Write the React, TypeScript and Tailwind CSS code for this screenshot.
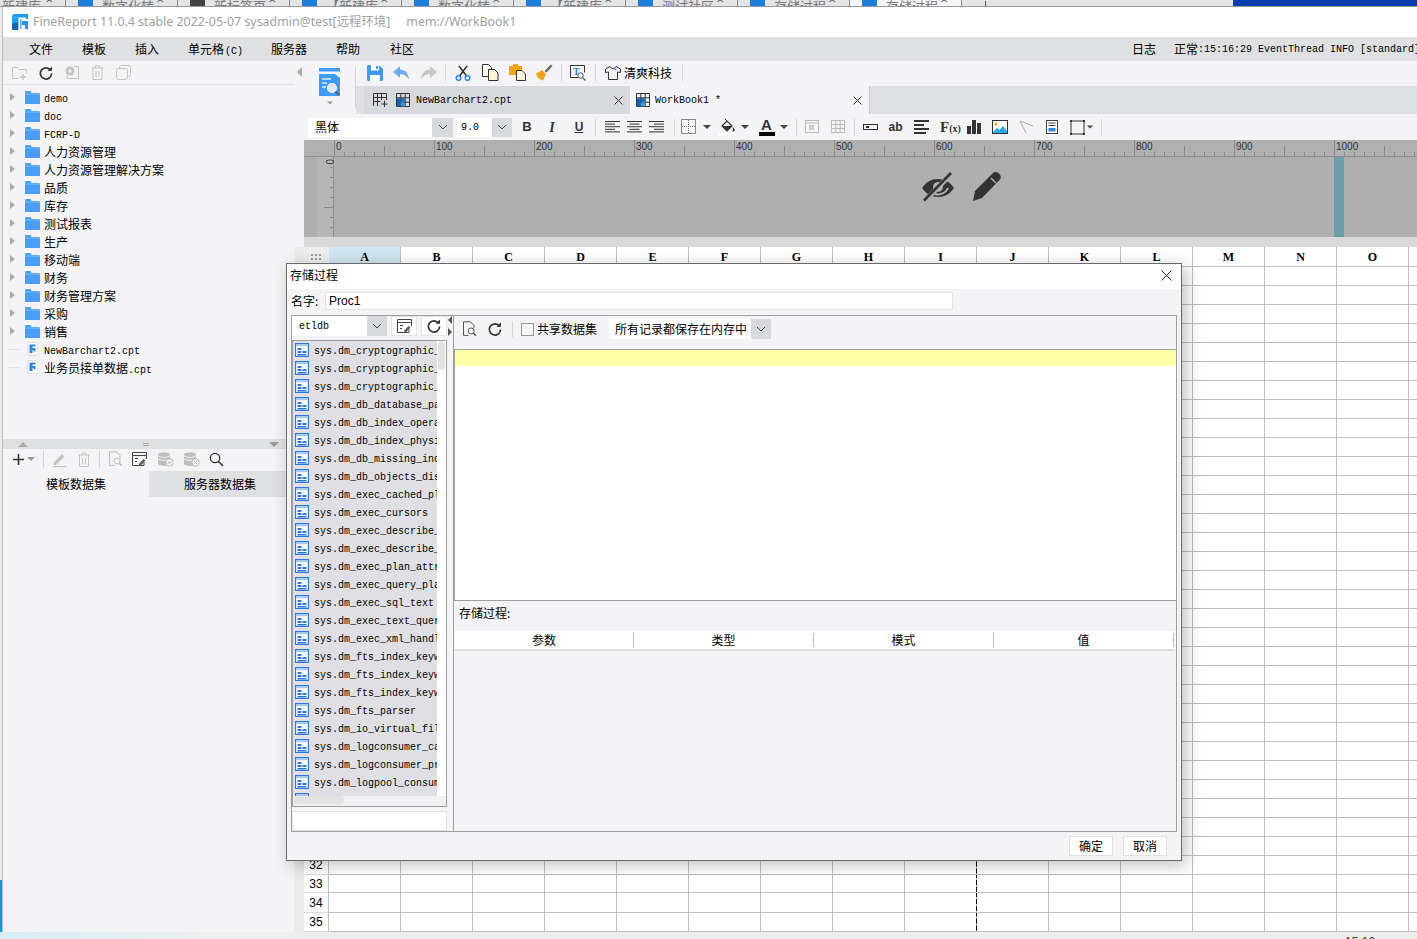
import type { ReactNode } from "react";

const cjk = "font-['Noto_Sans_CJK_SC',sans-serif] text-[12px] text-black";
const mono = "font-['Liberation_Mono','Noto_Sans_CJK_SC',monospace] text-[10px] text-black";
const treeMono = `${mono} inline-block -translate-y-px`;

const browserTabs = ["数字化转", "新标签页", "【新建库", "数字化转", "【新建库", "测试社区", "存储过程", "存储过程"];
const folders = ["人力资源管理", "人力资源管理解决方案", "品质", "库存", "测试报表", "生产", "移动端", "财务", "财务管理方案", "采购", "销售"];
const procs = [
  "sys.dm_cryptographic_provider_algorithms",
  "sys.dm_cryptographic_provider_keys",
  "sys.dm_cryptographic_provider_properties",
  "sys.dm_db_database_page_allocations",
  "sys.dm_db_index_operational_stats",
  "sys.dm_db_index_physical_stats",
  "sys.dm_db_missing_index_columns",
  "sys.dm_db_objects_disabled",
  "sys.dm_exec_cached_plan_dependent",
  "sys.dm_exec_cursors",
  "sys.dm_exec_describe_first_result",
  "sys.dm_exec_describe_first_result_set",
  "sys.dm_exec_plan_attributes",
  "sys.dm_exec_query_plan",
  "sys.dm_exec_sql_text",
  "sys.dm_exec_text_query_plan",
  "sys.dm_exec_xml_handles",
  "sys.dm_fts_index_keywords",
  "sys.dm_fts_index_keywords_by_doc",
  "sys.dm_fts_index_keywords_by_prop",
  "sys.dm_fts_parser",
  "sys.dm_io_virtual_file_stats",
  "sys.dm_logconsumer_cachebufferrefs",
  "sys.dm_logconsumer_privatecachebuffers",
  "sys.dm_logpool_consumers",
  "sys.dm_logpool_hashentries",
];
const columns = "ABCDEFGHIJKLMNOP".split("");
const rows = Array.from({ length: 35 }, (_, i) => i + 1);

function Svg({ w = 18, h = 18, children, className }: { w?: number; h?: number; children: ReactNode; className?: string }) {
  return (
    <svg width={w} height={h} viewBox={`0 0 ${w} ${h}`} fill="none" className={`shrink-0 ${className ?? ""}`}>
      {children}
    </svg>
  );
}

function Logo() {
  return (
    <svg width="16" height="16" viewBox="0 0 16 16" className="shrink-0">
      <path d="M3 0h13v5H9.500v10H6.500V3.500H0V3a3 3 0 0 1 3-3z" fill="#1b9af2" />
      <path d="M0 3.500h6.500V16H0z" fill="#1b9af2" />
      <path d="M0 10l6.500-2v8H0z" fill="#1663b4" />
      <path d="M6.500 3.500h1.800V16H6.500zM6.500 3.500H14v1.800H6.500z" fill="#fff" />
      <path d="M10 7h6v8h-3v-4h-3z" fill="#1b9af2" />
    </svg>
  );
}

function Folder() {
  return (
    <Svg w={15} h={13}>
      <path d="M0 1.500C0 .7.600 0 1.400 0h3.800l1.600 2h6.800c.8 0 1.400.6 1.400 1.400V13H0z" fill="#4a9df8" />
      <path d="M0 3h15" stroke="#8dc1fb" strokeWidth=".8" />
    </Svg>
  );
}

function Caret({ className }: { className?: string }) {
  return <span className={`inline-block h-0 w-0 border-x-[4px] border-t-[4px] border-x-transparent border-t-[#444] ${className ?? ""}`} />;
}

function Sep({ h = "h-[17px]" }: { h?: string }) {
  return <span className={`block w-px shrink-0 bg-[#d4d5d8] ${h}`} />;
}

function Refresh() {
  return (
    <Svg w={14} h={14}>
      <path d="M11.600 4.200A5.600 5.600 0 1 0 12.600 7.500" stroke="#333" strokeWidth="1.700" />
      <path d="M8.400 4.800h4.600V.4z" fill="#333" />
    </Svg>
  );
}

function DocSearch({ c = "#555" }: { c?: string }) {
  return (
    <Svg w={15} h={16}>
      <path d="M1.500.8h7l3.500 3.500v3M1.500.8v13.600h5" stroke={c} />
      <circle cx="9.200" cy="10" r="3" stroke={c} />
      <path d="M11.400 12.200l2.400 2.400" stroke={c} strokeWidth="1.500" />
    </Svg>
  );
}

function DsEdit() {
  return (
    <Svg w={15} h={14}>
      <path d="M12 10v3.500H.5V.5h14V7" stroke="#444" />
      <path d="M.5 3.500h14M3 6.500h3M3 9.500h2" stroke="#444" />
      <path d="M7 12l4.500-5 1.800 1.600-4.500 5H7z" fill="#555" />
    </Svg>
  );
}

function Db({ badge }: { badge: "play" | "x" }) {
  return (
    <Svg w={17} h={15}>
      <ellipse cx="7" cy="2.600" rx="6" ry="2.400" fill="#bdbdbd" />
      <path d="M1 3.500v8c0 1.300 2.700 2.400 6 2.400s6-1.100 6-2.400v-8c0 1.300-2.700 2.400-6 2.400S1 4.800 1 3.500z" fill="#bdbdbd" />
      <path d="M1 7c1.500 1.600 10.500 1.600 12 0" stroke="#f4f4f6" />
      <circle cx="12.500" cy="10.500" r="3.700" fill="#f4f4f6" stroke="#bbb" />
      {badge === "play" ? <path d="M11.500 8.800l3 1.700-3 1.700z" fill="#bbb" /> : <path d="M11 9l3 3M14 9l-3 3" stroke="#bbb" />}
    </Svg>
  );
}

function TableIcon() {
  return (
    <Svg w={14} h={14}>
      <path d="M.5.5h13v13H.5zM.5 4.800h13M.5 9.200h13M4.800.5v13M9.200.5v13" stroke="#333" />
      <path d="M1 5.300h7.700v3.400H5.300v4.800H1z" fill="#1565b5" />
      <path d="M6 9.500h2.700v4H6z" fill="#1b9af2" />
    </Svg>
  );
}

function ProcIcon() {
  return (
    <Svg w={14} h={14}>
      <rect x=".5" y=".5" width="13" height="13" fill="#fff" stroke="#2f77e4" strokeWidth="1.300" />
      <path d="M1 1h12v2.200H1z" fill="#a9c9f5" />
      <path d="M2.500 5H6.500V7H2.500zM2.500 8H6.500V10H2.500zM7.500 8H11.500V10H7.500zM2.500 11H11.500V12.500H2.500z" fill="#2f77e4" />
    </Svg>
  );
}

function Align({ kind }: { kind: "l" | "c" | "r" }) {
  const short = [1, 3];
  return (
    <Svg w={15} h={13}>
      {[0, 1, 2, 3, 4].map((i) => {
        const len = short.includes(i) ? 10 : 15;
        const x = kind === "l" ? 0 : kind === "c" ? (15 - len) / 2 : 15 - len;
        return <rect key={i} x={x} y={i * 2.6} width={len} height="1" fill="#333" />;
      })}
    </Svg>
  );
}

function Select({ value, width, arrow, text, pad = "pl-[7px]" }: { value: string; width: string; arrow: string; text?: string; pad?: string }) {
  return (
    <div className={`flex shrink-0 items-center bg-white ${width}`}>
      <span className={`flex-1 overflow-hidden whitespace-nowrap ${pad} ${text ?? cjk}`}>{value}</span>
      <span className={`flex h-full items-center justify-center bg-[#d8d9dd] ${arrow}`}>
        <Svg w={10} h={6}>
          <path d="M1 1l4 4 4-4" stroke="#444" />
        </Svg>
      </span>
    </div>
  );
}

function BrowserTabs() {
  return (
    <div className="flex h-[7px] shrink-0 overflow-hidden border-b border-[#999] bg-[#e2e4e6]">
      <div className="relative flex w-[66px] shrink-0 items-end border-r border-[#888] pl-[2px]">
        <span className="font-['Noto_Sans_CJK_SC',sans-serif] text-[13px] leading-[0px] text-[#777]">新建库</span>
        <span className="absolute right-[12px] top-[-7px] text-[13px] leading-[13px] text-[#555]">×</span>
      </div>
      {browserTabs.map((t, i) => (
        <div key={i} className={`relative flex w-[112px] shrink-0 items-end gap-[9px] border-r border-[#888] pl-[12px] ${i === 7 ? "bg-[#f6f6f6]" : ""}`}>
          <span className={`h-[6px] w-[15px] shrink-0 ${i === 1 ? "bg-[#444]" : "bg-[#1b7ddc]"}`} />
          <span className="whitespace-nowrap font-['Noto_Sans_CJK_SC',sans-serif] text-[13px] leading-[0px] text-[#777]">{t}</span>
          <span className="absolute right-[13px] top-[-7px] text-[13px] leading-[13px] text-[#555]">×</span>
        </div>
      ))}
      <div className="flex flex-1 items-end pl-[23px]">
        <span className="h-[5px] w-px bg-[#555]" />
      </div>
      <div className="w-[184px] shrink-0 bg-[#0a3db0]" />
    </div>
  );
}

function TitleBar() {
  return (
    <div className="flex h-[30px] shrink-0 items-center bg-white pl-[9px] font-['Noto_Sans','Noto_Sans_CJK_SC',sans-serif] text-[12.4px] text-[#a0a0a0]">
      <Logo />
      <span className="ml-[5px] whitespace-nowrap">FineReport 11.0.4 stable 2022-05-07 sysadmin@test[远程环境]</span>
      <span className="ml-[16px] whitespace-nowrap">mem://WorkBook1</span>
    </div>
  );
}

function MenuBar() {
  const items: [string, string][] = [["文件", "ml-[26px]"], ["模板", "ml-[29px]"], ["插入", "ml-[29px]"], ["单元格", "ml-[29px]"], ["服务器", "ml-[28px]"], ["帮助", "ml-[29px]"], ["社区", "ml-[30px]"]];
  return (
    <div className="flex h-[24px] shrink-0 items-center overflow-hidden bg-[#dfe0e2]">
      {items.map(([label, ml]) => (
        <span key={label} className={`${cjk} whitespace-nowrap ${ml}`}>
          {label}
          {label === "单元格" ? <span className={`${mono} ml-[1px]`}>(C)</span> : null}
        </span>
      ))}
      <div className="ml-auto flex w-[285px] shrink-0 items-center whitespace-nowrap">
        <span className={cjk}>日志</span>
        <span className="mx-[9px] h-[11px] w-px bg-black" />
        <span className={cjk}>正常</span>
        <span className={mono}>:15:16:29 EventThread INFO [standard]</span>
      </div>
    </div>
  );
}

function TreeRow({ caret = true, children, icon }: { caret?: boolean; children: ReactNode; icon: ReactNode }) {
  return (
    <div className="flex h-[18px] items-center">
      <span className="flex w-[22px] justify-start pl-[7px]">
        {caret ? <span className="h-0 w-0 border-y-[4px] border-l-[5px] border-y-transparent border-l-[#aaa]" /> : <span className="ml-[-1px] mt-[1px] h-px w-[12px] bg-[#e2e2e4]" />}
      </span>
      {icon}
      <span className="ml-[4px] whitespace-nowrap">{children}</span>
    </div>
  );
}

function FileIcon() {
  return (
    <Svg w={15} h={14}>
      <path d="M3 .5h8l2 2v11H3z" fill="#fff" stroke="#ddd" />
      <path d="M4.500 2.500h6v2H7.500v1.500h3v3.500h-2V8h-1v3h-3z" fill="#2b89e6" />
    </Svg>
  );
}

function LeftPanel() {
  return (
    <div className="flex w-[291px] shrink-0 flex-col">
      <div className="flex h-[24px] shrink-0 items-center gap-[11px] border-b border-[#dfe0e2] pl-[9px]">
        <Svg w={15} h={14}>
          <path d="M.5 12.500V1.500h5l1.500 2h7.500v4M.5 12.500h6" stroke="#c4c4c4" />
          <path d="M11 8v6M8 11h6" stroke="#c4c4c4" strokeWidth="1.500" />
        </Svg>
        <span className="flex w-[15px] justify-center"><Refresh /></span>
        <Svg w={15} h={15}>
          <circle cx="6" cy="6" r="4.500" fill="#c4c4c4" />
          <circle cx="6" cy="6" r="1.700" fill="#f4f4f6" />
          <path d="M10 1.500h4.500v12H3v-3" stroke="#c4c4c4" />
        </Svg>
        <Svg w={15} h={15}>
          <path d="M1.500 3h12M5 3V.8h5V3M3 3v11.500h9V3M6 6v6M9 6v6" stroke="#c4c4c4" />
        </Svg>
        <Svg w={15} h={15}>
          <rect x="3.500" y=".5" width="11" height="11" rx="2" stroke="#c4c4c4" />
          <rect x=".5" y="3.500" width="11" height="11" rx="2" fill="#f4f4f6" stroke="#c4c4c4" />
        </Svg>
      </div>
      <div className="mt-[3px] h-[351px] shrink-0">
        <TreeRow icon={<Folder />}><span className={treeMono}>demo</span></TreeRow>
        <TreeRow icon={<Folder />}><span className={treeMono}>doc</span></TreeRow>
        <TreeRow icon={<Folder />}><span className={treeMono}>FCRP-D</span></TreeRow>
        {folders.map((f) => (
          <TreeRow key={f} icon={<Folder />}><span className={cjk}>{f}</span></TreeRow>
        ))}
        <TreeRow caret={false} icon={<FileIcon />}><span className={treeMono}>NewBarchart2.cpt</span></TreeRow>
        <TreeRow caret={false} icon={<FileIcon />}>
          <span className={cjk}>业务员接单数据</span>
          <span className={mono}>.cpt</span>
        </TreeRow>
      </div>
      <div className="flex h-[10px] shrink-0 items-center justify-between bg-[#dfe0e2] px-[15px]">
        <span className="h-0 w-0 border-x-[5px] border-b-[5px] border-x-transparent border-b-[#aaa]" />
        <span className="mr-[5px] h-[3px] w-[6px] border-y border-[#aaa]" />
        <span className="h-0 w-0 border-x-[5px] border-t-[5px] border-x-transparent border-t-[#999]" />
      </div>
      <div className="flex h-[22px] shrink-0 items-center pb-[2px] pl-[9px]">
        <Svg w={13} h={13}><path d="M6.500 1v11M1 6.500h11" stroke="#333" strokeWidth="1.600" /></Svg>
        <Caret className="ml-[2px] border-t-[#999]" />
        <span className="ml-[8px]"><Sep /></span>
        <span className="ml-[8px]">
          <Svg w={15} h={15}>
            <path d="M1.500 11l8.500-9 2.500 2.500L4 13H1.500z" fill="#c4c4c4" />
            <path d="M1 14.500h13" stroke="#c4c4c4" />
          </Svg>
        </span>
        <span className="ml-[10px]">
          <Svg w={14} h={15}><path d="M1 3h12M5 3V1h4v2M2.500 3v11.500h9V3M5.500 6v6M8.500 6v6" stroke="#c4c4c4" /></Svg>
        </span>
        <span className="ml-[8px]"><Sep /></span>
        <span className="ml-[8px]"><DocSearch c="#bbb" /></span>
        <span className="ml-[9px]"><DsEdit /></span>
        <span className="ml-[10px]"><Db badge="play" /></span>
        <span className="ml-[9px]"><Db badge="x" /></span>
        <span className="ml-[9px]">
          <Svg w={15} h={15}>
            <circle cx="6" cy="6" r="4.700" stroke="#333" strokeWidth="1.300" />
            <path d="M9.500 9.500l4.500 4.500" stroke="#333" strokeWidth="1.600" />
          </Svg>
        </span>
      </div>
      <div className="flex h-[26px] shrink-0">
        <div className={`flex w-[146px] items-center justify-center bg-[#f4f4f6] ${cjk}`}>模板数据集</div>
        <div className={`flex flex-1 items-center justify-start bg-[#dfe0e2] pl-[35px] ${cjk}`}>服务器数据集</div>
      </div>
    </div>
  );
}

function TopToolbar() {
  return (
    <div className="flex h-[53px] shrink-0">
      <div className="flex w-[51px] shrink-0 flex-col items-center pt-[7px]">
        <Svg w={21} h={28}>
          <path d="M0 0h21v3.500H0z" fill="#3d9bf5" />
          <path d="M0 6h16l5 4v18H0z" fill="#3d9bf5" />
          <path d="M3 11h9M3 15h5M3 19h4" stroke="#d8ebfe" strokeWidth="1.300" />
          <circle cx="13" cy="20" r="4.500" fill="#dfe6ee" stroke="#f2f5f8" strokeWidth="1.200" />
          <path d="M16.500 23.500l3.500 3.500" stroke="#555" strokeWidth="1.600" />
        </Svg>
        <Caret className="mt-[5px] scale-75 border-t-[#999]" />
      </div>
      <span className="mt-[6px] h-[41px] w-px bg-[#d4d5d8]" />
      <div className="flex min-w-0 flex-1 flex-col">
        <div className="flex h-[25px] shrink-0 items-center pb-[2px] pl-[11px]">
          <Svg w={16} h={16}>
            <path d="M1.500 0h10.500L16 4v10.500c0 .8-.7 1.500-1.500 1.500h-13C.7 16 0 15.300 0 14.500v-13C0 .7.700 0 1.500 0z" fill="#3d9bf5" />
            <path d="M4 0h8v5.500H4z" fill="#fff" />
            <path d="M9 1h2v3H9z" fill="#3d9bf5" />
            <path d="M3 10h10v6H3z" fill="#fff" />
          </Svg>
          <span className="ml-[10px]">
            <Svg w={17} h={14}>
              <path d="M7 0L0 6l7 6V8.200c4-.3 6.500 1.300 9 5.300-.6-6.500-4-10-9-10z" fill="#6caef5" />
            </Svg>
          </span>
          <span className="ml-[10px]">
            <Svg w={17} h={14}>
              <path d="M10 0l7 6-7 6V8.200c-4-.3-6.500 1.300-9 5.300C1.600 7 5 3.500 10 3.500z" fill="#c6c6c6" />
            </Svg>
          </span>
          <span className="ml-[8px]"><Sep /></span>
          <span className="ml-[9px]">
            <Svg w={16} h={16}>
              <path d="M4 1l7.500 10M12 1L4.500 11" stroke="#333" strokeWidth="1.500" />
              <circle cx="3.500" cy="13" r="2.300" stroke="#2b86e6" strokeWidth="1.500" />
              <circle cx="12.500" cy="13" r="2.300" stroke="#2b86e6" strokeWidth="1.500" />
            </Svg>
          </span>
          <span className="ml-[11px]">
            <Svg w={17} h={17}>
              <path d="M.5.5h6l3 3v9h-9z" fill="#fff" stroke="#333" />
              <path d="M6.500 5.500h6l3.500 3.500v7.500H6.500z" fill="#fff3d9" stroke="#333" />
            </Svg>
          </span>
          <span className="ml-[10px]">
            <Svg w={17} h={17}>
              <path d="M0 2h4V0h5v2h4v9H0z" fill="#f0a512" />
              <path d="M7.500 6.500h5.500l3.500 3.500v6.500h-9z" fill="#fff3d9" stroke="#333" />
            </Svg>
          </span>
          <span className="ml-[10px]">
            <Svg w={17} h={17}>
              <path d="M0 9.500L6 6l4 4-3 6.500C3.500 15.500 1 13 0 9.500z" fill="#f0a512" />
              <path d="M8.500 7l6.500-6.500 1.500 1.500L10.500 8.500z" fill="#666" />
            </Svg>
          </span>
          <span className="ml-[8px]"><Sep /></span>
          <span className="ml-[8px]">
            <Svg w={16} h={16}>
              <path d="M8 12.500H.5V.5h14v7" stroke="#333" />
              <text x="3" y="10" fontSize="10" fontWeight="700" fill="#2b86e6" fontFamily="Liberation Serif">T</text>
              <circle cx="10.500" cy="10.500" r="2.700" stroke="#555" />
              <path d="M12.500 12.500l3 3" stroke="#555" strokeWidth="1.300" />
            </Svg>
          </span>
          <span className="ml-[9px]"><Sep /></span>
          <span className="ml-[9px]">
            <Svg w={16} h={14}>
              <path d="M5 .5L.5 3v3.500L3.500 6v7.500h9V6l3 .5V3L11 .5C10.500 3 5.500 3 5 .5z" stroke="#333" />
              <path d="M9.500 3.500h2" stroke="#2b86e6" strokeWidth="1.500" />
            </Svg>
          </span>
          <span className={`ml-[3px] whitespace-nowrap ${cjk}`}>清爽科技</span>
          <span className="ml-[10px]"><Sep /></span>
        </div>
        <div className="flex flex-1 bg-[#dfe0e2]">
          <div className="ml-[8px] flex w-[26px] shrink-0 items-center justify-start bg-[#d8d9dd] pl-[9px]">
            <Svg w={15} h={14}>
              <path d="M.5 13V.5h13V7M.5 4.500h13M.5 8.500h7M4.500.5V13M8.500.5V7M11.500 7.500v6.500M8.500 11h6" stroke="#333" />
            </Svg>
          </div>
          <div className="flex w-[241px] shrink-0 items-center border-r border-[#f4f4f6] bg-[#d8d9dd] pl-[6px]">
            <TableIcon />
            <span className={`ml-[6px] flex-1 ${mono}`}>NewBarchart2.cpt</span>
            <Svg w={9} h={9} className="mr-[7px]"><path d="M.5.5l8 8M8.500.5l-8 8" stroke="#333" /></Svg>
          </div>
          <div className="flex w-[239px] shrink-0 items-center border-r border-[#c8c8c8] bg-[#f4f4f6] pl-[5px]">
            <TableIcon />
            <span className={`ml-[5px] flex-1 ${mono}`}>WorkBook1 *</span>
            <Svg w={9} h={9} className="mr-[7px]"><path d="M.5.5l8 8M8.500.5l-8 8" stroke="#333" /></Svg>
          </div>
        </div>
      </div>
    </div>
  );
}

function FormatBar() {
  return (
    <div className="flex h-[26px] shrink-0 items-center bg-[#f4f4f6] pl-[4px] text-[#333]">
      <Select value="黑体" width="h-[19px] w-[145px]" arrow="w-[21px]" />
      <span className="ml-[4px]"><Select value="9.0" width="h-[19px] w-[55px]" arrow="w-[20px]" text={mono} pad="pl-[4px]" /></span>
      <span className="ml-[9px] w-[12px] text-center font-['Liberation_Sans'] text-[13px] font-bold">B</span>
      <span className="ml-[13px] w-[12px] text-center font-['Liberation_Serif'] text-[14px] font-bold italic">I</span>
      <span className="ml-[15px] w-[12px] text-center font-['Liberation_Sans'] text-[12px] font-bold underline">U</span>
      <span className="ml-[10px]"><Sep /></span>
      <span className="ml-[9px]"><Align kind="l" /></span>
      <span className="ml-[7px]"><Align kind="c" /></span>
      <span className="ml-[7px]"><Align kind="r" /></span>
      <span className="ml-[10px]"><Sep /></span>
      <span className="ml-[6px]">
        <Svg w={16} h={16}>
          <rect x=".5" y=".5" width="14" height="14" stroke="#222" strokeDasharray="1 1" />
          <path d="M7.500 1v13M1 7.500h13" stroke="#777" strokeDasharray="1 1" />
        </Svg>
      </span>
      <Caret className="ml-[6px]" />
      <span className="ml-[8px]">
        <Svg w={17} h={17}>
          <path d="M3 7l5-5 5 5-5 5z" stroke="#333" strokeWidth="1.200" />
          <path d="M6 0l3 3" stroke="#333" />
          <path d="M3 7h10l-5 5z" fill="#333" />
          <path d="M14 8l2 3-1 1.500h-1.500z" fill="#333" />
          <rect y="14" width="16" height="3" fill="#fff" />
        </Svg>
      </span>
      <Caret className="ml-[5px]" />
      <span className="ml-[10px] flex w-[15px] flex-col items-center">
        <span className="font-['Liberation_Sans'] text-[15px] font-bold leading-[12px]">A</span>
        <span className="mt-[1px] h-[4px] w-[16px] bg-black" />
      </span>
      <Caret className="ml-[6px]" />
      <span className="ml-[8px]"><Sep /></span>
      <span className="ml-[8px]">
        <Svg w={15} h={14}>
          <rect x=".5" y=".5" width="13" height="12" stroke="#bbb" />
          <path d="M.5 3h13" stroke="#bbb" />
          <rect x="4" y="5" width="5" height="5" fill="#ccc" />
        </Svg>
      </span>
      <span className="ml-[11px]">
        <Svg w={15} h={14}>
          <path d="M.5.5h13v12H.5zM.5 4.500h13M.5 8.500h13M4.800.5v12M9.200.5v12" stroke="#bbb" />
        </Svg>
      </span>
      <span className="ml-[8px]"><Sep /></span>
      <span className="ml-[8px]">
        <Svg w={15} h={7}>
          <rect x=".5" y=".5" width="14" height="5" stroke="#333" />
          <rect x="3" y="2" width="3" height="2" fill="#333" />
        </Svg>
      </span>
      <span className="ml-[10px] w-[15px] text-center font-['Liberation_Sans'] text-[12px] font-bold">ab</span>
      <span className="ml-[11px]">
        <Svg w={15} h={14}>
          <path d="M0 0h15v2H0zM0 4h10v2H0zM0 8h15v2H0zM0 12h12v2H0z" fill="#333" />
        </Svg>
      </span>
      <span className="ml-[11px] w-[17px] whitespace-nowrap font-['Liberation_Serif'] text-[15px] font-bold">F<span className="text-[10px]">(x)</span></span>
      <span className="ml-[10px]">
        <Svg w={14} h={14}>
          <path d="M0 6h4v8H0zM5 0h4v14H5zM10 3h4v11h-4z" fill="#333" />
        </Svg>
      </span>
      <span className="ml-[11px]">
        <Svg w={16} h={14}>
          <rect x=".5" y=".5" width="15" height="13" fill="#fff" stroke="#333" />
          <circle cx="4" cy="4" r="1.500" fill="#f0a512" />
          <path d="M1 12l4-4 2.500 2L11 6l4 5v2H1z" fill="#2da8ef" />
        </Svg>
      </span>
      <span className="ml-[11px]">
        <Svg w={15} h={14}>
          <path d="M1 1l13 5M1 1l6 12" stroke="#aaa" />
        </Svg>
      </span>
      <span className="ml-[12px]">
        <Svg w={12} h={14}>
          <rect x=".5" y=".5" width="11" height="13" fill="#fff" stroke="#444" />
          <path d="M2.500 3h7M2.500 5.500h7" stroke="#444" />
          <path d="M2.500 8h7v3.500h-7z" fill="#2b86e6" />
        </Svg>
      </span>
      <span className="ml-[12px]">
        <Svg w={15} h={15}>
          <rect x="1" y="1" width="13" height="13" stroke="#333" />
          <path d="M0 1h2M13 1h2M0 14h2M13 14h2M1 0v2M14 0v2M1 13v2M14 13v2" stroke="#111" />
        </Svg>
      </span>
      <Caret className="ml-[1px] scale-75" />
      <span className="ml-[7px]"><Sep /></span>
    </div>
  );
}

function Ruler() {
  const ticks = Array.from({ length: 109 }, (_, i) => i);
  return (
    <svg width="1113" height="17" viewBox="0 0 1113 17" className="block shrink-0">
      <rect width="1113" height="17" fill="#b0b0b0" />
      <path d="M0 16.500h1113" stroke="#8c8c8c" />
      {ticks.map((i) => {
        const x = 30 + i * 10 + 0.5;
        const h = i % 10 === 0 ? 17 : i % 5 === 0 ? 10 : 4;
        return <path key={i} d={`M${x} ${16 - h}v${h}`} stroke="#8a8a8a" />;
      })}
      {ticks.filter((i) => i % 10 === 0).map((i) => (
        <text key={i} x={32 + i * 10} y="10" fontSize="10" fill="#333" fontFamily="Liberation Sans">{i * 10}</text>
      ))}
    </svg>
  );
}

function VerticalRuler() {
  const ticks = [1, 2, 3, 4, 5, 6, 7];
  return (
    <svg width="17" height="80" viewBox="0 0 17 80" className="ml-[13px] block shrink-0">
      <rect width="17" height="80" fill="#b6b6b6" />
      <path d="M16.500 0v80" stroke="#8c8c8c" />
      {ticks.map((i) => (
        <path key={i} d={`M${i === 5 ? 7 : 13} ${i * 10 + 0.5}H16`} stroke="#8a8a8a" />
      ))}
      <text x="9" y="2" fontSize="10" fill="#333" fontFamily="Liberation Sans" transform="rotate(90 9 2)">0</text>
    </svg>
  );
}

function HeaderArea() {
  return (
    <div className="flex h-[80px] shrink-0 bg-[#afafaf]">
      <VerticalRuler />
      <div className="flex-1 pl-[587px] pt-[14px]">
        <div className="flex items-start gap-[18px]">
          <Svg w={34} h={32}>
            <path d="M1 17c4-6 9.500-9 16-9s12 3 16 9c-4 6-9.500 9-16 9S5 23 1 17z" fill="#333" />
            <circle cx="17" cy="16" r="5" fill="#afafaf" />
            <path d="M4 30L30 3" stroke="#afafaf" strokeWidth="5" />
            <path d="M3 29.500L30 2" stroke="#333" strokeWidth="2.500" />
            <path d="M14 23c5 1.500 11-1 13-6" stroke="#afafaf" strokeWidth="2" />
          </Svg>
          <Svg w={30} h={30}>
            <path d="M0 30l2-10L20 2c1.500-1.500 4-1.500 6 .5s2.500 4.500 1 6L9 27z" fill="#333" />
            <path d="M18 7l5 5" stroke="#afafaf" strokeWidth="1.500" />
          </Svg>
        </div>
      </div>
      <div className="mr-[73px] w-[10px] shrink-0 bg-[#6d9eab]" />
    </div>
  );
}

function Grid() {
  return (
    <div className="flex min-h-0 flex-1 flex-col overflow-hidden">
      <div className="flex h-[20px] shrink-0">
        <div className="flex w-[25px] shrink-0 items-center justify-center bg-[#eeeeef]">
          <Svg w={11} h={7}>
            <path d="M0 0h2v2H0zM4 0h2v2H4zM8 0h2v2H8zM0 4h2v2H0zM4 4h2v2H4zM8 4h2v2H8z" fill="#999" />
          </Svg>
        </div>
        {columns.map((c) => (
          <div key={c} className={`flex h-[20px] w-[72px] shrink-0 items-center justify-center border-b border-r border-[#bfbfbf] font-['Liberation_Serif'] text-[12px] font-bold text-black ${c === "A" ? "bg-[#cfe6f0]" : "bg-white"}`}>
            {c === "P" ? "" : c}
          </div>
        ))}
      </div>
      {rows.map((r) => (
        <div key={r} className={`flex shrink-0 ${r === 33 ? "h-[18px]" : r === 34 ? "h-[20px]" : "h-[19px]"}`}>
          <div className="flex w-[25px] shrink-0 items-center justify-center border-b border-r border-b-[#dcdcdc] border-r-[#bfbfbf] bg-white font-['Liberation_Sans'] text-[12px] text-black">{r}</div>
          {columns.map((c) => (
            <div key={c} className={`h-full w-[72px] shrink-0 border-b border-[#bfbfbf] ${c === "I" ? "bg-white bg-[linear-gradient(#000_70%,#bfbfbf_70%)] bg-[length:1px_7px] bg-right bg-repeat-y" : "border-r bg-white"}`} />
          ))}
        </div>
      ))}
    </div>
  );
}

function Dialog() {
  return (
    <div className="absolute left-[286px] top-[263px] flex h-[598px] w-[896px] flex-col border border-[#6a6a6a] bg-[#f4f4f6] shadow-[4px_4px_16px_rgba(0,0,0,0.25)]">
      <div className="flex h-[25px] shrink-0 items-center justify-between bg-white pb-[3px] pl-[3px] pr-[9px]">
        <span className={cjk}>存储过程</span>
        <Svg w={11} h={11}><path d="M.5.5l10 10M10.500.5l-10 10" stroke="#222" /></Svg>
      </div>
      <div className="flex h-[26px] shrink-0 items-center pb-[2px] pl-[4px]">
        <span className={`w-[34px] ${cjk}`}>名字:</span>
        <div className="flex h-[18px] w-[628px] items-center border border-[#e4e4e6] bg-white pl-[3px] font-['Liberation_Sans'] text-[12px] text-black">Proc1</div>
      </div>
      <div className="mx-[4px] flex h-[517px] shrink-0 border border-[#a0a0a0]">
        <div className="flex w-[155px] shrink-0 flex-col">
          <div className="flex h-[20px] shrink-0 items-center">
            <Select value="etldb" width="h-[20px] w-[95px]" arrow="w-[20px]" text={mono} />
            <span className="ml-[4px] flex h-[20px] w-[26px] items-center justify-center border border-[#e4e4e6] bg-white"><DsEdit /></span>
            <span className="ml-[4px] flex h-[20px] w-[26px] items-center justify-center border border-[#e4e4e6] bg-white"><Refresh /></span>
          </div>
          <div className="mt-[4px] flex h-[467px] shrink-0 flex-col border border-[#a0a0a0]">
            <div className="flex min-h-0 flex-1">
              <div className="min-w-0 flex-1 overflow-hidden bg-[#e0e0e4] pl-[2px]">
                {procs.map((p, i) => (
                  <div key={i} className="flex h-[18px] items-center whitespace-nowrap">
                    <ProcIcon />
                    <span className={`ml-[5px] pt-[2px] ${mono}`}>{p}</span>
                  </div>
                ))}
              </div>
              <div className="w-[9px] shrink-0 bg-white px-px">
                <div className="h-[29px] rounded-[4px] bg-[#e3e3e3]" />
              </div>
            </div>
            <div className="flex h-[10px] shrink-0 bg-[#f0f0f2] pl-px">
              <div className="h-[8px] w-[50px] rounded-[4px] bg-[#e3e3e3]" />
            </div>
          </div>
          <div className="mt-[4px] h-[20px] shrink-0 border border-[#e4e4e6] bg-white" />
        </div>
        <div className="flex w-[7px] shrink-0 flex-col items-center gap-[4px] border-r border-[#a0a0a0] pt-0">
          <span className="h-0 w-0 border-y-[4px] border-r-[4px] border-y-transparent border-r-[#555]" />
          <span className="h-0 w-0 border-y-[4px] border-l-[4px] border-y-transparent border-l-[#555]" />
        </div>
        <div className="flex min-w-0 flex-1 flex-col">
          <div className="flex h-[33px] shrink-0 items-center pb-[7px] pl-[8px]">
            <DocSearch />
            <span className="ml-[11px]"><Refresh /></span>
            <span className="ml-[10px]"><Sep h="h-[16px]" /></span>
            <span className="ml-[8px] h-[13px] w-[13px] border border-[#999] bg-[#f4f4f6]" />
            <span className={`ml-[3px] whitespace-nowrap ${cjk}`}>共享数据集</span>
            <span className="ml-[12px]"><Select value="所有记录都保存在内存中" width="h-[20px] w-[162px]" arrow="w-[20px]" pad="pl-[6px]" /></span>
          </div>
          <div className="h-[252px] shrink-0 border-y border-l border-[#a0a0a0] bg-white">
            <div className="h-[16px] bg-[#ffffa8]" />
          </div>
          <div className={`flex h-[30px] shrink-0 items-center pb-[6px] pl-[5px] ${cjk}`}>存储过程:</div>
          <div className="mx-px flex h-[20px] shrink-0 border-b-2 border-[#dcdcdc] bg-white">
            {["参数", "类型", "模式", "值"].map((h, i) => (
              <div key={h} className={`my-[2px] flex items-center justify-center border-r border-[#bdbdb2] ${i === 0 ? "w-[179px]" : "w-[180px]"}`}>
                <span className={cjk}>{h}</span>
              </div>
            ))}
          </div>
        </div>
      </div>
      <div className="flex flex-1 items-center justify-end gap-[10px] pr-[14px]">
        <span className={`flex h-[20px] w-[44px] items-center justify-center border border-[#e0e0e2] bg-white ${cjk}`}>确定</span>
        <span className={`flex h-[20px] w-[44px] items-center justify-center border border-[#e0e0e2] bg-white ${cjk}`}>取消</span>
      </div>
    </div>
  );
}

export default function App() {
  return (
    <div className="relative flex h-[939px] w-[1417px] flex-col overflow-hidden bg-[#f4f4f6]">
      <BrowserTabs />
      <div className="flex min-h-0 flex-1">
        <div className="flex w-[3px] shrink-0 flex-col justify-end border-r border-[#bdbdbd] bg-[#ececec]">
          <div className="h-[52px] bg-[#0a9fdc]" />
        </div>
        <div className="flex min-w-0 flex-1 flex-col">
          <TitleBar />
          <MenuBar />
          <div className="flex min-h-0 flex-1">
            <LeftPanel />
            <div className="flex w-[10px] shrink-0 flex-col">
              <div className="flex h-[186px] shrink-0 justify-center pt-[6px]">
                <span className="h-0 w-0 border-y-[5px] border-r-[5px] border-y-transparent border-r-[#aaa]" />
              </div>
              <div className="flex-1 bg-[#ebebeb]" />
            </div>
            <div className="flex min-w-0 flex-1 flex-col">
              <TopToolbar />
              <FormatBar />
              <Ruler />
              <HeaderArea />
              <div className="h-[10px] shrink-0 bg-[#d9d9d9]" />
              <Grid />
            </div>
          </div>
        </div>
      </div>
      <div className="flex h-[7px] shrink-0 justify-end overflow-hidden bg-[linear-gradient(90deg,#d8eef5,#eeeeee_15%)] pr-[42px] pt-[4px]">
        <span className="font-['Liberation_Sans'] text-[12px] leading-[12px] text-[#333]">15:16</span>
      </div>
      <Dialog />
    </div>
  );
}
